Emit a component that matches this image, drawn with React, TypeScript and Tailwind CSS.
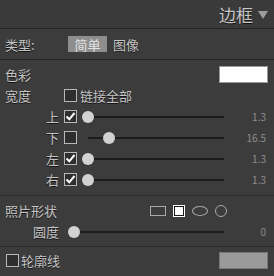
import React from "react";

const font = { fontFamily: '"Noto Sans CJK SC", "Noto Sans", sans-serif' };

function Check({ checked }: { checked: boolean }) {
  return (
    <div className="w-[13px] h-[13px] border border-[#b8b8b8] bg-[#2e2e2e] flex items-center justify-center shrink-0">
      {checked && (
        <svg width="11" height="11" viewBox="0 0 11 11">
          <path d="M1.5 5.5 L4.3 8.3 L9.5 2" stroke="#ffffff" strokeWidth="2" fill="none" />
        </svg>
      )}
    </div>
  );
}

function Slider({ pos, width }: { pos: number; width: number }) {
  return (
    <div className="relative h-[12px]" style={{ width }}>
      <div className="absolute left-[6px] right-0 top-[5px] h-[2px] bg-[#1c1c1c]" />
      <div className="absolute top-0 w-[12px] h-[12px] rounded-full bg-[#d2d2d2]" style={{ left: pos }} />
    </div>
  );
}

function SideRow({ label, checked, pos, value }: { label: string; checked: boolean; pos: number; value: string }) {
  return (
    <div className="h-[21px] flex items-center">
      <div className="w-[60px] text-right pr-[1px] text-[13px] text-[#c4c4c4] leading-none [text-shadow:0_1px_0_#161616]">{label}</div>
      <div className="ml-[4px]"><Check checked={checked} /></div>
      <div className="ml-[5px]"><Slider pos={pos} width={142} /></div>
      <div className="flex-1 text-right pr-[8px] text-[10px] text-[#8e8e8e] leading-none">{value}</div>
    </div>
  );
}

export default function App() {
  return (
    <div className="w-[274px] h-[276px] bg-[#3c3c3c] overflow-hidden select-none" style={font}>
      <div className="h-[29px] flex items-center justify-end pr-[6px] border-b border-[#262626] bg-[#3a3a3a]">
        <span className="text-[17px] leading-none text-[#c6c6c6] [text-shadow:0_1px_0_#151515]">边框</span>
        <svg width="10" height="8" viewBox="0 0 10 8" className="ml-[5px] mt-[2px]">
          <path d="M0 0 L10 0 L5 8 Z" fill="#9c9c9c" />
        </svg>
      </div>
      <div className="h-[31px] flex items-center border-b border-[#262626]">
        <span className="ml-[5px] w-[63px] text-[13px] leading-none text-[#c4c4c4] [text-shadow:0_1px_0_#161616]">类型:</span>
        <span className="w-[39px] h-[16px] bg-[#8e8e8e] flex items-center justify-center text-[13px] leading-none text-[#e2e2e2]">简单</span>
        <span className="ml-[6px] text-[13px] leading-none text-[#c4c4c4] [text-shadow:0_1px_0_#161616]">图像</span>
      </div>
      <div className="pt-[4px] pb-[5px] border-b border-[#2a2a2a]">
        <div className="h-[21px] flex items-center justify-between">
          <span className="ml-[5px] text-[13px] leading-none text-[#c4c4c4] [text-shadow:0_1px_0_#161616]">色彩</span>
          <div className="mr-[6px] w-[49px] h-[17px] bg-white border border-[#9a9a9a]" />
        </div>
        <div className="h-[21px] flex items-center">
          <span className="ml-[5px] w-[59px] text-[13px] leading-none text-[#c4c4c4] [text-shadow:0_1px_0_#161616]">宽度</span>
          <Check checked={false} />
          <span className="ml-[3px] text-[13px] leading-none text-[#c4c4c4] [text-shadow:0_1px_0_#161616]">链接全部</span>
        </div>
        <SideRow label="上" checked pos={0} value="1.3" />
        <SideRow label="下" checked={false} pos={21} value="16.5" />
        <SideRow label="左" checked pos={0} value="1.3" />
        <SideRow label="右" checked pos={0} value="1.3" />
      </div>
      <div className="pt-[4px] pb-[4px] border-b border-[#2a2a2a]">
        <div className="h-[21px] flex items-center">
          <span className="ml-[5px] w-[145px] text-[13px] leading-none text-[#c4c4c4] [text-shadow:0_1px_0_#161616]">照片形状</span>
          <div className="w-[16px] h-[10px] border border-[#a8a8a8]" />
          <div className="ml-[7px] w-[12px] h-[12px] border border-white bg-[#1a1a1a] p-[1px]">
            <div className="w-full h-full bg-white" />
          </div>
          <div className="ml-[7px] w-[16px] h-[10px] border border-[#a8a8a8] rounded-[50%]" />
          <div className="ml-[7px] w-[12px] h-[12px] border border-[#a8a8a8] rounded-full" />
        </div>
        <div className="h-[21px] flex items-center">
          <div className="w-[60px] text-right pr-[1px] text-[13px] leading-none text-[#c4c4c4] [text-shadow:0_1px_0_#161616]">圆度</div>
          <div className="ml-[8px]"><Slider pos={0} width={156} /></div>
          <div className="flex-1 text-right pr-[8px] text-[10px] text-[#8e8e8e] leading-none">0</div>
        </div>
      </div>
      <div className="h-[27px] flex items-center justify-between">
        <div className="flex items-center ml-[6px]">
          <Check checked={false} />
          <span className="ml-[2px] text-[13px] leading-none text-[#c4c4c4] [text-shadow:0_1px_0_#161616]">轮廓线</span>
        </div>
        <div className="mr-[6px] w-[49px] h-[17px] bg-[#9a9a9a] border border-[#777]" />
      </div>
    </div>
  );
}
